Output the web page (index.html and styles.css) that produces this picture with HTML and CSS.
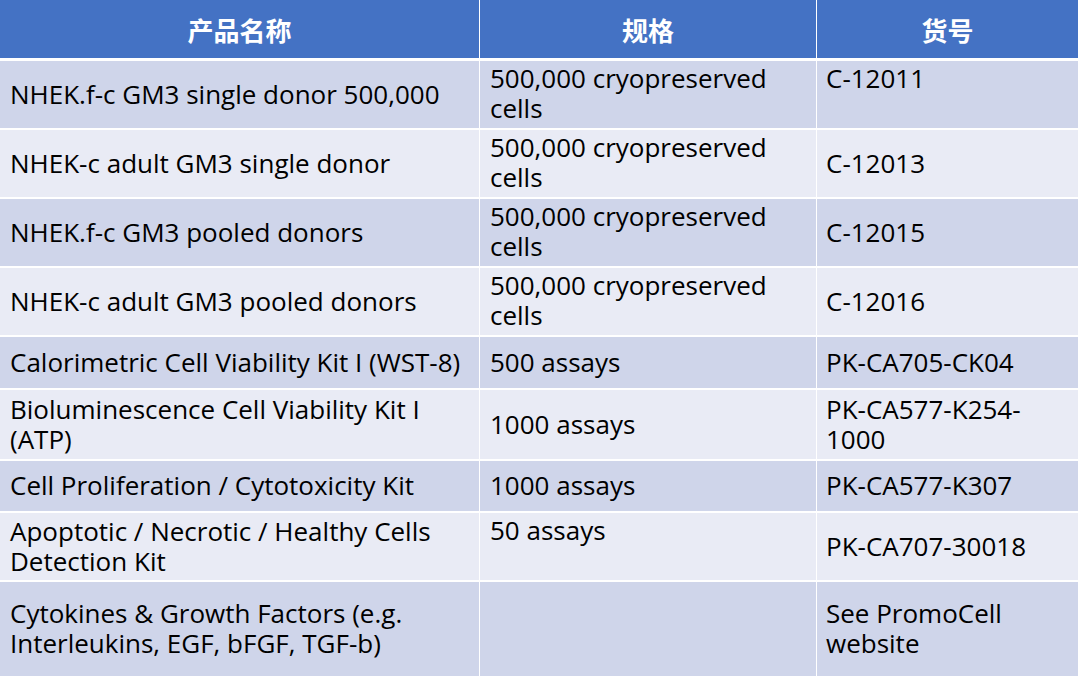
FILE: index.html
```html
<!DOCTYPE html>
<html lang="zh">
<head>
<meta charset="utf-8">
<link rel="stylesheet" href="styles.css">
</head>
<body>
<table class="products">
  <colgroup>
    <col class="c1"><col class="c2"><col class="c3">
  </colgroup>
  <thead>
    <tr class="head"><th>产品名称</th><th>规格</th><th>货号</th></tr>
  </thead>
  <tbody>
    <tr class="r69 odd"><td>NHEK.f-c GM3 single donor 500,000</td><td class="top">500,000 cryopreserved cells</td><td class="top">C-12011</td></tr>
    <tr class="r69 even"><td>NHEK-c adult GM3 single donor</td><td class="top">500,000 cryopreserved cells</td><td>C-12013</td></tr>
    <tr class="r69 odd"><td>NHEK.f-c GM3 pooled donors</td><td class="top">500,000 cryopreserved cells</td><td>C-12015</td></tr>
    <tr class="r69 even"><td>NHEK-c adult GM3 pooled donors</td><td class="top">500,000 cryopreserved cells</td><td>C-12016</td></tr>
    <tr class="r53 odd"><td>Calorimetric Cell Viability Kit I (WST-8)</td><td>500 assays</td><td>PK-CA705-CK04</td></tr>
    <tr class="r71 even"><td>Bioluminescence Cell Viability Kit I (ATP)</td><td>1000 assays</td><td>PK-CA577-K254-1000</td></tr>
    <tr class="r52 odd"><td>Cell Proliferation / Cytotoxicity Kit</td><td>1000 assays</td><td>PK-CA577-K307</td></tr>
    <tr class="r69 even"><td>Apoptotic / Necrotic / Healthy Cells Detection Kit</td><td class="top">50 assays</td><td>PK-CA707-30018</td></tr>
    <tr class="r94 odd last"><td>Cytokines &amp; Growth Factors (e.g. Interleukins, EGF, bFGF, TGF-b)</td><td></td><td>See PromoCell website</td></tr>
  </tbody>
</table>
</body>
</html>
```
FILE: styles.css
```css
html, body {
  margin: 0;
  padding: 0;
  background: #ffffff;
}

.products {
  border-collapse: separate;
  border-spacing: 0;
  table-layout: fixed;
  width: 1078px;
  font-family: "Open Sans", "Noto Sans", "Noto Sans CJK SC", sans-serif;
  font-size: 26px;
  line-height: 30px;
  color: #000000;
}

.c1 { width: 480px; }
.c2 { width: 337px; }
.c3 { width: 261px; }

.products th,
.products td {
  box-sizing: border-box;
  padding: 0 8px 2px 10px;
  border-right: 1px solid #ffffff;
  border-bottom: 2px solid #ffffff;
  vertical-align: middle;
  text-align: left;
  font-weight: normal;
}

.products td:last-child {
  padding-left: 9px;
}

.products th:last-child,
.products td:last-child {
  border-right: 0;
}

.head th {
  height: 61px;
  border-bottom: 3px solid #ffffff;
  background: #4472c4;
  color: #ffffff;
  text-align: center;
  font-family: "Noto Sans CJK SC", sans-serif;
  font-weight: bold;
  font-size: 26px;
  padding: 2px 0 0 0;
}

.odd td { background: #cfd5ea; }
.even td { background: #e9ebf5; }

.r69 td { height: 69px; }
.r53 td { height: 53px; }
.r71 td { height: 71px; }
.r52 td { height: 52px; }
.r94 td { height: 94px; border-bottom: 0; }

.products td.top {
  vertical-align: top;
  padding-top: 2px;
}
```
